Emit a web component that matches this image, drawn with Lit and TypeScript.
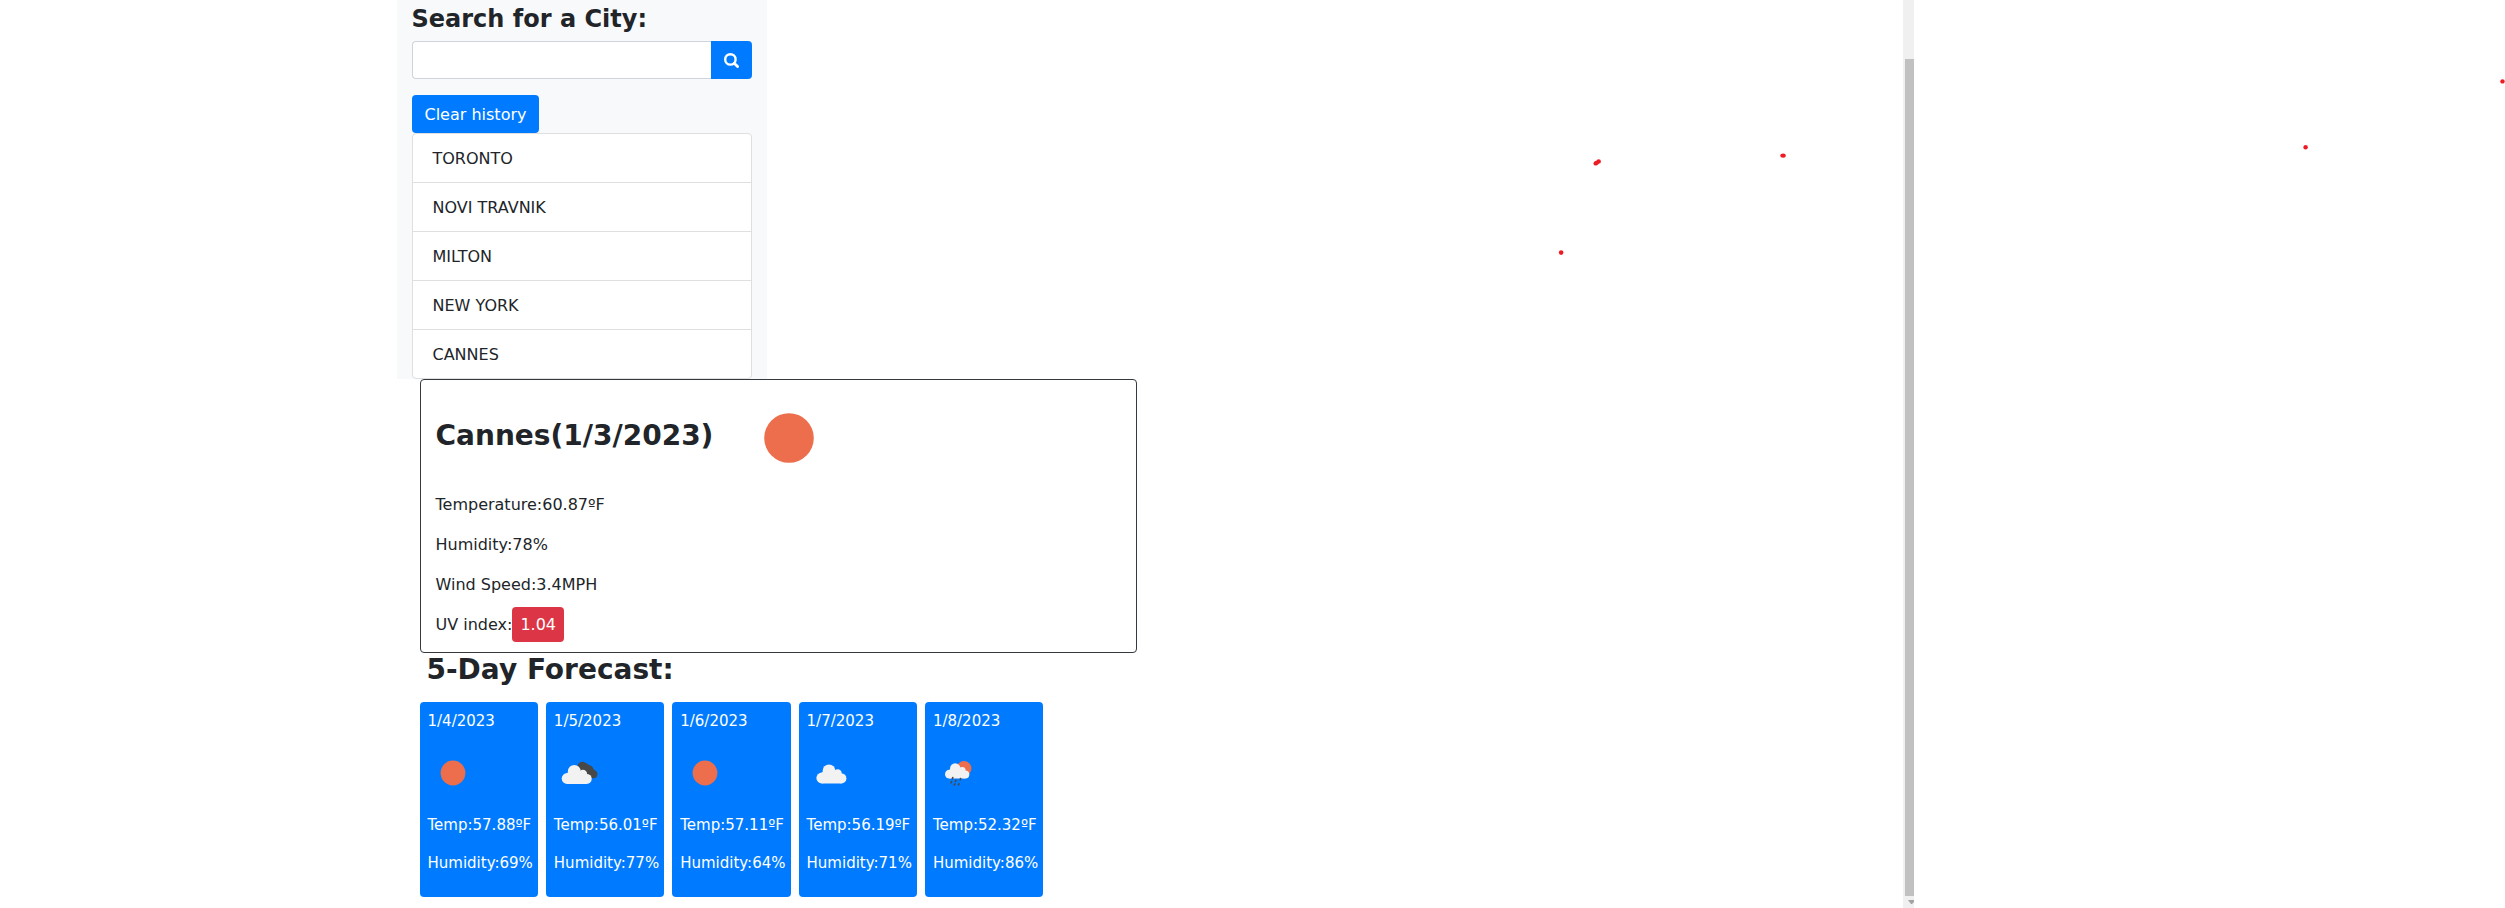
import { LitElement, html, css, svg } from "lit";
import { customElement, property, state } from "lit/decorators.js";

type Sky = "clear" | "clouds" | "broken" | "rain";

interface Day {
  date: string;
  sky: Sky;
  temp: string;
  humidity: string;
}

const cloud = svg`
  <g fill="#f2f2f2">
    <circle cx="5.4" cy="13.6" r="5.4"></circle>
    <circle cx="12.6" cy="6.4" r="6.4"></circle>
    <circle cx="21.2" cy="9" r="4.2"></circle>
    <circle cx="25" cy="14" r="5"></circle>
    <path d="M5.4 19 V8.2 L12 4 L18.4 6 L21 9 L25 14 V19 Z"></path>
  </g>`;

const skies: Record<Sky, unknown> = {
  clear: svg`<circle cx="25" cy="25" r="12.4" fill="#ec6e4c"></circle>`,
  clouds: svg`<g transform="translate(9.4 16.4)">${cloud}</g>`,
  broken: svg`
    <g fill="#484848">
      <circle cx="28.4" cy="18.6" r="4.9"></circle>
      <circle cx="35" cy="21.6" r="4"></circle>
      <circle cx="39.4" cy="26.2" r="4"></circle>
      <path d="M26 20 L32 15 L38 19 L42 24 L39 30 L32 29 Z"></path>
    </g>
    <g transform="translate(7.7 16.9)">${cloud}</g>`,
  rain: svg`
    <circle cx="31" cy="20.4" r="7.4" fill="#ec6e4c"></circle>
    <g transform="translate(12 15.2) scale(0.81)">${cloud}</g>
    <g stroke="#484848" stroke-width="1.6" stroke-linecap="round">
      <path d="M19.8 29.6 l-0.4 1 M27.6 30.6 l-0.4 1.2 M18.6 33.6 l-0.6 1.2 M23 32.2 l-0.6 1.2 M21.8 36 l-0.6 1 M26 35.8 l-0.6 1"></path>
    </g>`,
};

@customElement("weather-icon")
export class WeatherIcon extends LitElement {
  @property() sky: Sky = "clear";

  static styles = css`
    :host {
      display: block;
      flex: none;
      width: 50px;
      height: 50px;
    }
    .icon {
      display: block;
      width: 100%;
      height: 100%;
    }
  `;

  render() {
    return html`<svg class="icon" viewBox="0 0 50 50" role="img" aria-label=${this.sky}>${skies[this.sky]}</svg>`;
  }
}

@customElement("app-root")
export class AppRoot extends LitElement {
  @state() private cities = ["TORONTO", "NOVI TRAVNIK", "MILTON", "NEW YORK", "CANNES"];

  private days: Day[] = [
    { date: "1/4/2023", sky: "clear", temp: "57.88", humidity: "69" },
    { date: "1/5/2023", sky: "broken", temp: "56.01", humidity: "77" },
    { date: "1/6/2023", sky: "clear", temp: "57.11", humidity: "64" },
    { date: "1/7/2023", sky: "clouds", temp: "56.19", humidity: "71" },
    { date: "1/8/2023", sky: "rain", temp: "52.32", humidity: "86" },
  ];

  static styles = css`
    :host {
      display: grid;
      grid-template-columns: minmax(0, 1903fr) 11px minmax(0, 591fr);
      position: relative;
      min-height: 100vh;
      background: #fff;
      color: #212529;
      font: 16px/24px Verdana, "DejaVu Sans", sans-serif;
    }
    * {
      box-sizing: border-box;
    }
    h2, h3, p, ul {
      margin: 0;
      padding: 0;
    }
    .container {
      width: 100%;
      max-width: 1110px;
      margin: 0 auto;
    }
    .sidebar {
      width: calc(100% / 3);
      padding: 5px 15px 0;
      background: #f8f9fa;
    }
    .label {
      display: block;
      margin-bottom: 7px;
      font-size: 24px;
      line-height: 29px;
      font-weight: 700;
    }
    .search {
      display: flex;
      margin-bottom: 16px;
    }
    .field {
      flex: 1;
      min-width: 0;
      height: 38px;
      padding: 6px 12px;
      border: 1px solid #ced4da;
      border-right: 0;
      border-radius: 4px 0 0 4px;
      background: #fff;
      font: inherit;
    }
    .button {
      display: block;
      height: 38px;
      padding: 1px 13px 0;
      border: 0;
      border-radius: 4px;
      background: #007bff;
      color: #fff;
      font: inherit;
    }
    .go {
      width: 41px;
      border-radius: 0 4px 4px 0;
    }
    .glass {
      display: block;
      width: 15px;
      height: 15px;
    }
    .history {
      border: 1px solid #dfdfdf;
      border-radius: 4px;
      background: #fff;
      list-style: none;
    }
    .city {
      padding: 13px 20px 11px;
    }
    .city + .city {
      border-top: 1px solid #dfdfdf;
    }
    .results {
      width: calc(200% / 3);
      padding-left: 23px;
    }
    .today {
      padding: 8px 15px 0;
      border: 1px solid #343a40;
      border-radius: 4px;
    }
    .title {
      display: flex;
      align-items: center;
      gap: 26px;
      margin-bottom: 5px;
      font-size: 28px;
      line-height: 34px;
    }
    .name {
      padding-bottom: 4px;
    }
    .large {
      width: 100px;
      height: 100px;
    }
    .line {
      margin-bottom: 16px;
    }
    .line:last-child {
      margin-bottom: 15px;
    }
    .uv {
      padding: 8px;
      border-radius: 4px;
      background: #dc3545;
      color: #fff;
    }
    .heading {
      margin-bottom: 15px;
      padding-left: 7px;
      font-size: 28px;
      line-height: 34px;
    }
    .days {
      display: grid;
      grid-template-columns: repeat(5, minmax(0, 1fr));
      gap: 8px;
      width: 87%;
    }
    .day {
      display: flex;
      flex-direction: column;
      gap: 16px;
      padding: 8px 8px 23px;
      border-radius: 4px;
      background: #007bff;
      color: #fff;
      font-size: 15px;
      line-height: 22px;
      white-space: nowrap;
    }
    .rail {
      display: flex;
      flex-direction: column;
      padding: 59px 0 4px 2px;
      background: #f0f0f0;
    }
    .thumb {
      flex: 1;
      background: #c1c1c1;
    }
    .arrow {
      align-self: flex-end;
      width: 6px;
      height: 4px;
      margin-top: 4px;
    }
    .marks {
      position: absolute;
      inset: 0;
      width: 100%;
      height: 100%;
      pointer-events: none;
      fill: #ed1c24;
    }
  `;

  private clear() {
    this.cities = [];
  }

  render() {
    return html`
      <main>
        <div class="container">
          <section class="sidebar">
            <label class="label" for="city">Search for a City:</label>
            <div class="search">
              <input class="field" id="city" type="text" />
              <button class="button go" type="button" aria-label="Search">
                <svg class="glass" viewBox="0 0 15 15" fill="none" stroke="#fff">
                  <circle cx="6.4" cy="6.4" r="5.2" stroke-width="2.4"></circle>
                  <path d="M10.2 10.2 L13.6 13.6" stroke-width="2.8" stroke-linecap="round"></path>
                </svg>
              </button>
            </div>
            <button class="button" type="button" @click=${this.clear}>Clear history</button>
            <ul class="history">
              ${this.cities.map((city) => html`<li class="city">${city}</li>`)}
            </ul>
          </section>
          <section class="results">
            <div class="today">
              <h3 class="title">
                <span class="name">Cannes(1/3/2023)</span>
                <weather-icon class="large" sky="clear"></weather-icon>
              </h3>
              <p class="line">Temperature:60.87ºF</p>
              <p class="line">Humidity:78%</p>
              <p class="line">Wind Speed:3.4MPH</p>
              <p class="line">UV index:<span class="uv">1.04</span></p>
            </div>
            <h2 class="heading">5-Day Forecast:</h2>
            <div class="days">
              ${this.days.map(
                (day) => html`
                  <article class="day">
                    <p>${day.date}</p>
                    <weather-icon sky=${day.sky}></weather-icon>
                    <p>Temp:${day.temp}ºF</p>
                    <p>Humidity:${day.humidity}%</p>
                  </article>
                `,
              )}
            </div>
          </section>
        </div>
      </main>
      <div class="rail">
        <div class="thumb"></div>
        <svg class="arrow" viewBox="0 0 6 4"><path d="M0 0 H6 V2 L4 4 H3 Z" fill="#a3a3a3"></path></svg>
      </div>
      <svg class="marks" aria-hidden="true">
        <circle cx="62.32%" cy="252.6" r="2.3"></circle>
        <circle cx="63.7%" cy="163.4" r="2.2"></circle>
        <circle cx="63.75%" cy="162.6" r="2.2"></circle>
        <circle cx="63.82%" cy="161.4" r="2.2"></circle>
        <ellipse cx="71.18%" cy="155.6" rx="2.7" ry="2.2"></ellipse>
        <circle cx="92.04%" cy="147.2" r="2.2"></circle>
        <circle cx="99.9%" cy="81.4" r="2.2"></circle>
      </svg>
    `;
  }
}
